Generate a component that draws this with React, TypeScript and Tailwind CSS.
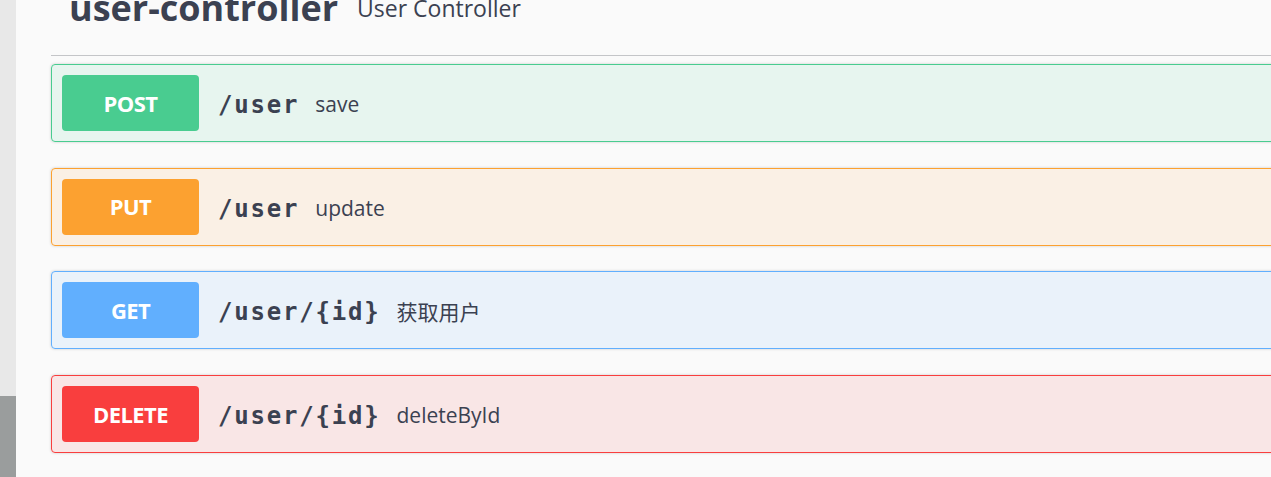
import React from 'react';

type Op = {
  method: string;
  path: string;
  summary: string;
  border: string;
  bg: string;
  badge: string;
};

const ops: Op[] = [
  { method: 'POST', path: '/user', summary: 'save', border: 'border-[#49cc90]', bg: 'bg-[#49cc90]/10', badge: 'bg-[#49cc90]' },
  { method: 'PUT', path: '/user', summary: 'update', border: 'border-[#fca130]', bg: 'bg-[#fca130]/10', badge: 'bg-[#fca130]' },
  { method: 'GET', path: '/user/{id}', summary: '获取用户', border: 'border-[#61affe]', bg: 'bg-[#61affe]/10', badge: 'bg-[#61affe]' },
  { method: 'DELETE', path: '/user/{id}', summary: 'deleteById', border: 'border-[#f93e3e]', bg: 'bg-[#f93e3e]/10', badge: 'bg-[#f93e3e]' },
];

function OpBlock({ op }: { op: Op }) {
  return (
    <div className={`h-[78px] rounded-[4px] border-[1.5px] ${op.border} ${op.bg} shadow-[0_0_3px_rgba(0,0,0,0.19)] flex items-center px-[10px]`}>
      <div className={`w-[137px] h-[56px] rounded-[4px] ${op.badge} flex items-center justify-center text-white font-bold text-[22px] tracking-[-0.6px] font-['Open_Sans',sans-serif]`}>
        {op.method}
      </div>
      <span className="ml-[19px] translate-y-[2px] text-[#3b4151] font-semibold text-[24px] tracking-[1.8px] font-['DejaVu_Sans_Mono',monospace]">
        {op.path}
      </span>
      <span className="ml-[16px] translate-y-[2px] text-[#3b4151] text-[21px] font-['Open_Sans','Noto_Sans_CJK_SC',sans-serif]">
        {op.summary}
      </span>
    </div>
  );
}

export default function App() {
  return (
    <div className="flex w-[1271px] h-[477px] overflow-hidden bg-[#fafafa]">
      {/* 左侧灰条 */}
      <div className="w-[16px] shrink-0 flex flex-col">
        <div className="h-[396px] bg-[#e8e8e8]" />
        <div className="flex-1 bg-[#9a9d9d]" />
      </div>

      <div className="shrink-0 w-[1260px] pl-[35px]">
        <div className="h-[56px] border-b border-[#c4c5c8] overflow-hidden">
          <div className="flex items-baseline pl-[18px] -mt-[10px] text-[#3b4151] font-['Open_Sans',sans-serif]">
            <span className="text-[36px] leading-[36px] font-bold">user-controller</span>
            <span className="ml-[19px] relative -top-[4px] text-[23px]">User Controller</span>
          </div>
        </div>

        <div className="mt-[8px] flex flex-col gap-[25.7px]">
          {ops.map((op) => (
            <OpBlock key={op.method} op={op} />
          ))}
        </div>
      </div>
    </div>
  );
}
